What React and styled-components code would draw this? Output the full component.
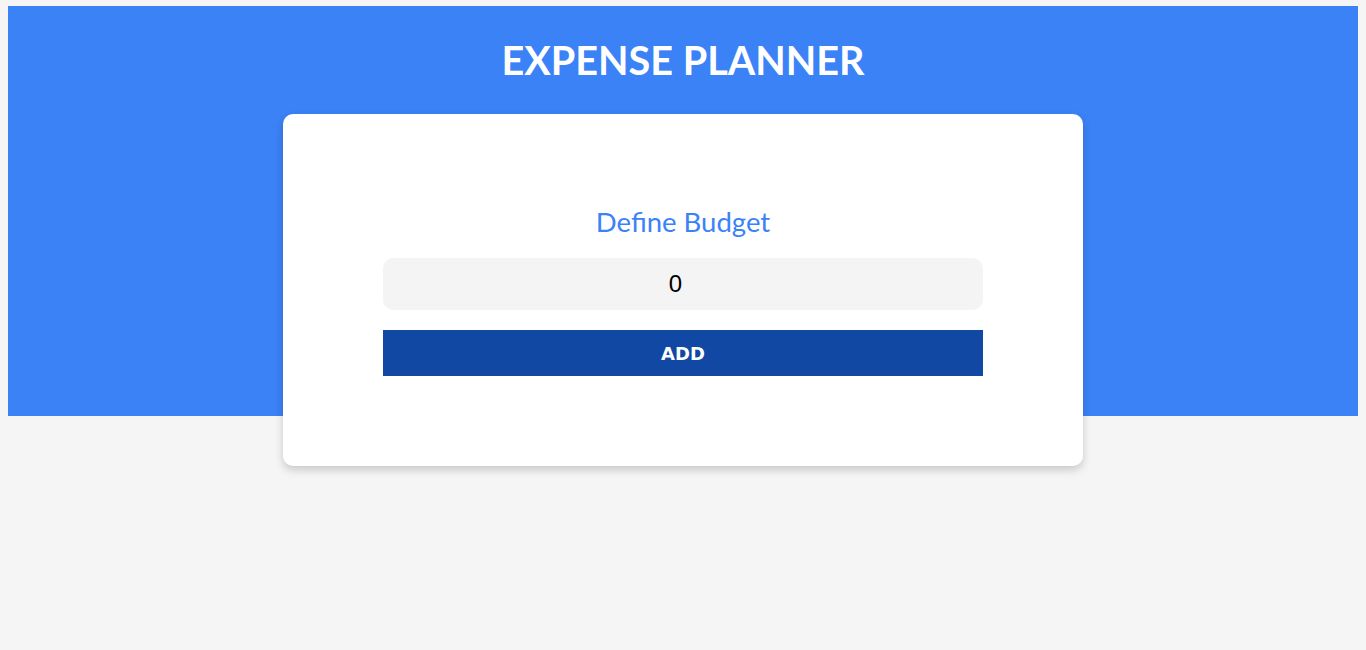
import React, { useState } from 'react';
import styled, { createGlobalStyle } from 'styled-components';

const GlobalStyle = createGlobalStyle`
  html, body {
    background: #f5f5f5;
  }
  body {
    margin: 6px 8px 8px;
    font-family: Lato, "Liberation Sans", sans-serif;
  }
  * {
    box-sizing: border-box;
  }
`;

// blue band of the header sits behind the top of the card
const Header = styled.header`
  background: linear-gradient(#3b82f6 410px, transparent 410px);
  padding-top: 30px;
  display: flex;
  flex-direction: column;
  align-items: center;
`;

const Title = styled.h1`
  margin: 0 0 30px;
  color: #fff;
  font-family: Lato, sans-serif;
  font-weight: 700;
  font-size: 39.6px;
  line-height: 48px;
  text-align: center;
`;

const Card = styled.div`
  width: 800px;
  margin-bottom: 12px;
  background: #fff;
  border-radius: 10px;
  box-shadow: 0 4px 8px rgba(0, 0, 0, 0.18);
  padding: 91px 100px 90px;
  display: flex;
  flex-direction: column;
  align-items: stretch;
`;

const Label = styled.label`
  color: #3b82f6;
  font-family: Lato, sans-serif;
  font-size: 27.5px;
  line-height: 34px;
  text-align: center;
  margin-bottom: 19px;
`;

const BudgetInput = styled.input`
  height: 52px;
  border: none;
  outline: none;
  border-radius: 10px;
  background: #f4f4f4;
  font-family: "Liberation Sans", Arial, sans-serif;
  font-size: 24px;
  text-align: center;
  color: #000;
  margin-bottom: 20px;
`;

const AddButton = styled.button`
  height: 46px;
  border: none;
  background: #1048a3;
  color: #fff;
  font-family: "DejaVu Sans", sans-serif;
  font-weight: 700;
  font-size: 18px;
  text-transform: uppercase;
  cursor: pointer;
`;

export default function App() {
  const [budget, setBudget] = useState(0);
  return (
    <>
      <GlobalStyle />
      <Header>
        <Title>EXPENSE PLANNER</Title>
        <Card>
          <Label htmlFor="budget">Define Budget</Label>
          <BudgetInput
            id="budget"
            type="number"
            value={budget}
            onChange={(e) => setBudget(e.target.value)}
          />
          <AddButton>Add</AddButton>
        </Card>
      </Header>
    </>
  );
}
